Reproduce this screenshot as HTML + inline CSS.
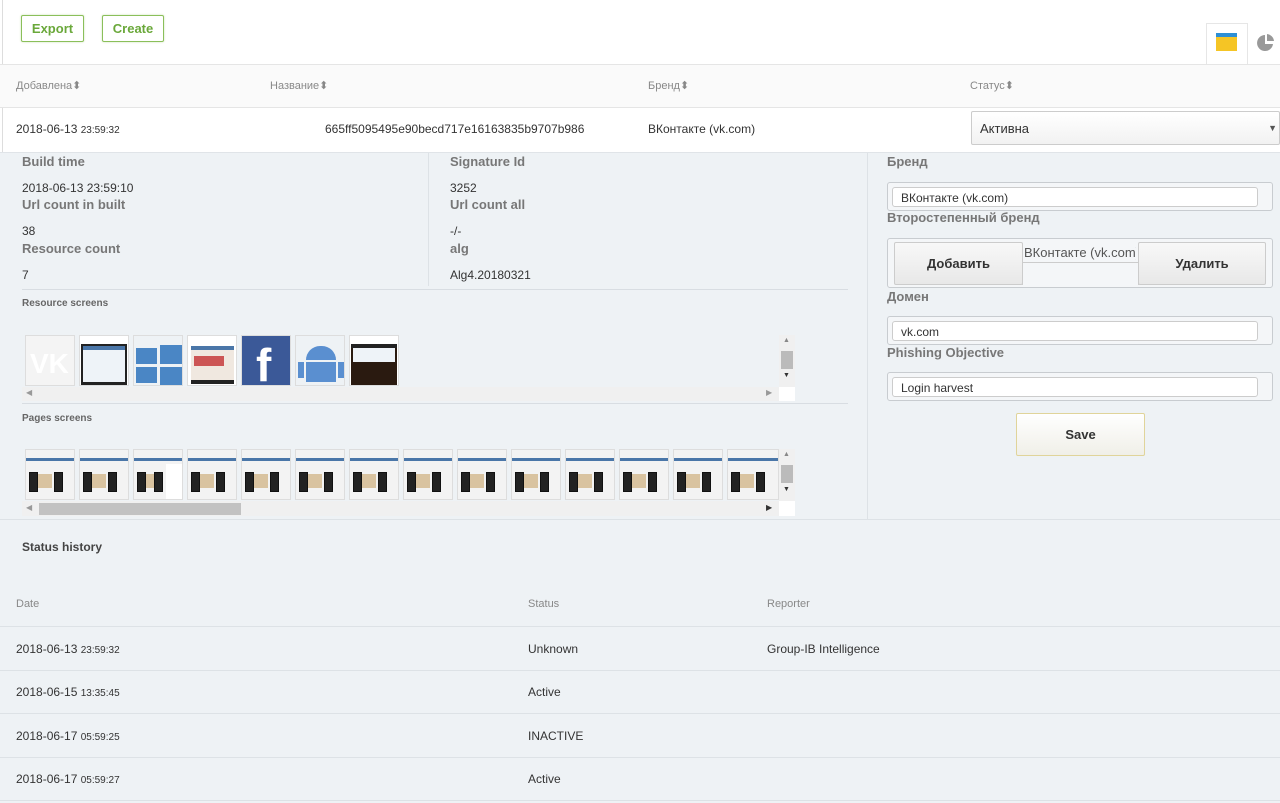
<!DOCTYPE html>
<html><head><meta charset="utf-8"><style>
*{box-sizing:border-box;margin:0;padding:0}
body{width:1280px;height:803px;overflow:hidden;background:#fff;font-family:"Liberation Sans",Arial,sans-serif;font-size:12px;color:#333;position:relative}
.a{position:absolute}
.btn{position:absolute;top:15px;height:27px;border:1px solid #8bbf5a;border-radius:2px;color:#6aa83a;font-size:13px;font-weight:bold;display:flex;align-items:center;justify-content:center;background:#fff;box-shadow:0 0 2px #cde3b8}
.th{color:#888;font-size:11px}
.lbl{color:#777;font-weight:bold;font-size:13px;position:absolute}
.val{position:absolute;font-size:12px;color:#333}
.sm{font-size:10px}
.inp{position:absolute;left:887px;width:386px;height:29px;border:1px solid #c8ccd0;border-radius:3px;background:#f4f6f8}
.inp div{position:absolute;left:4px;top:4px;right:14px;height:20px;border:1px solid #ccc;border-radius:3px;background:#fff;padding:3px 8px;font-size:12px}
.thumb{position:absolute;width:50px;height:51px;border:1px solid #ddd;background:#f3f3f3;overflow:hidden}
.pg .bar{position:absolute;left:0;right:0;top:8px;height:3px;background:#4a76a8}
.pg .ph{position:absolute;top:22px;width:9px;height:20px;background:#222;border:1px solid #111}
.pg .ph2{position:absolute;top:24px;left:16px;width:14px;height:14px;background:#d9c3a0}
.sb{position:absolute;width:16px;background:#f0f0f0}
.hr{position:absolute;left:0;width:1280px;height:1px;background:#dde2e6}
</style></head><body>
<div class="a" style="left:2px;top:0;width:1px;height:803px;background:#ddd"></div>
<div class="btn" style="left:21px;width:63px">Export</div>
<div class="btn" style="left:102px;width:62px">Create</div>
<div class="a" style="left:1206px;top:23px;width:42px;height:43px;border:1px solid #e6e6e6;border-bottom:none;background:#fff"></div>
<div class="a" style="left:1216px;top:33px;width:21px;height:18px;background:#f5c525;border-top:4px solid #2d8fd5"></div>
<svg class="a" style="left:1256px;top:33px" width="20" height="20" viewBox="0 0 20 20"><path d="M9 2A8 8 0 1 0 17 11H9Z" fill="#999"/><path d="M11 1A8 8 0 0 1 18 8H11Z" fill="#999"/></svg>
<div class="a" style="left:0;top:64px;width:1280px;height:44px;background:#fafafa;border-top:1px solid #e5e5e5;border-bottom:1px solid #e5e5e5"></div>
<div class="a th" style="left:16px;top:79px">Добавлена⬍</div>
<div class="a th" style="left:270px;top:79px">Название⬍</div>
<div class="a th" style="left:648px;top:79px">Бренд⬍</div>
<div class="a th" style="left:970px;top:79px">Статус⬍</div>
<div class="a" style="left:16px;top:122px">2018-06-13 <span class="sm">23:59:32</span></div>
<div class="a" style="left:325px;top:122px">665ff5095495e90becd717e16163835b9707b986</div>
<div class="a" style="left:648px;top:122px">ВКонтакте (vk.com)</div>
<div class="a" style="left:971px;top:111px;width:309px;height:34px;border:1px solid #ccc;border-radius:2px;background:linear-gradient(#fff,#f2f2f2);padding:9px 8px;font-size:13px">Активна<span style="position:absolute;right:2px;top:11px;font-size:9px;color:#555">▼</span></div>
<div class="a" style="left:0;top:152px;width:1280px;height:651px;background:#eef2f5;border-top:1px solid #e0e4e8"></div>
<div class="a" style="left:867px;top:153px;width:1px;height:366px;background:#dde2e6"></div>
<div class="a" style="left:428px;top:153px;width:1px;height:133px;background:#dde2e6"></div>
<div class="lbl" style="left:22px;top:154px">Build time</div>
<div class="val" style="left:22px;top:181px">2018-06-13 23:59:10</div>
<div class="lbl" style="left:22px;top:197px">Url count in built</div>
<div class="val" style="left:22px;top:224px">38</div>
<div class="lbl" style="left:22px;top:241px">Resource count</div>
<div class="val" style="left:22px;top:268px">7</div>
<div class="lbl" style="left:450px;top:154px">Signature Id</div>
<div class="val" style="left:450px;top:181px">3252</div>
<div class="lbl" style="left:450px;top:197px">Url count all</div>
<div class="val" style="left:450px;top:224px">-/-</div>
<div class="lbl" style="left:450px;top:241px">alg</div>
<div class="val" style="left:450px;top:268px">Alg4.20180321</div>
<div class="a" style="left:22px;top:289px;width:826px;height:1px;background:#d8dde2"></div>
<div class="a" style="left:22px;top:298px;font-size:10px;color:#666;font-weight:bold">Resource screens</div>
<div class="thumb" style="left:25px;top:335px;background:#f4f4f4"><span style="position:absolute;left:4px;top:12px;color:#fff;font-weight:bold;font-size:28px">VK</span></div>
<div class="thumb" style="left:79px;top:335px;background:#fff"><div class="a" style="left:1px;top:8px;width:46px;height:42px;background:#222"></div><div class="a" style="left:3px;top:10px;width:42px;height:36px;background:#eef3f8;border-top:4px solid #4a76a8"></div></div>
<div class="thumb" style="left:133px;top:335px;background:#eef2f5"><div class="a" style="left:2px;top:12px;width:21px;height:16px;background:#4a86c5"></div><div class="a" style="left:26px;top:9px;width:22px;height:19px;background:#4a86c5"></div><div class="a" style="left:2px;top:31px;width:21px;height:16px;background:#4a86c5"></div><div class="a" style="left:26px;top:31px;width:22px;height:19px;background:#4a86c5"></div></div>
<div class="thumb" style="left:187px;top:335px;background:#fff"><div class="a" style="left:3px;top:10px;width:43px;height:38px;background:#f0e8e0;border-top:4px solid #4a76a8;border-bottom:4px solid #222"></div><div class="a" style="left:6px;top:20px;width:30px;height:10px;background:#c55"></div></div>
<div class="thumb" style="left:241px;top:335px;background:#3b5998"><span style="position:absolute;left:14px;top:6px;color:#fff;font-weight:bold;font-size:46px;line-height:46px">f</span></div>
<div class="thumb" style="left:295px;top:335px;background:#eef2f5"><div class="a" style="left:10px;top:10px;width:30px;height:14px;background:#5a8fd0;border-radius:15px 15px 0 0"></div><div class="a" style="left:10px;top:26px;width:30px;height:20px;background:#5a8fd0"></div><div class="a" style="left:2px;top:26px;width:6px;height:16px;background:#5a8fd0"></div><div class="a" style="left:42px;top:26px;width:6px;height:16px;background:#5a8fd0"></div></div>
<div class="thumb" style="left:349px;top:335px;background:#fff"><div class="a" style="left:1px;top:8px;width:46px;height:42px;background:#2a1a10;border-top:4px solid #222"></div><div class="a" style="left:3px;top:12px;width:42px;height:14px;background:#eef3f8"></div></div>
<div class="sb" style="left:779px;top:335px;height:52px"><div class="a" style="left:2px;top:16px;width:12px;height:18px;background:#bbb"></div><span class="a" style="left:4px;top:2px;font-size:7px;color:#888">▲</span><span class="a" style="left:4px;top:37px;font-size:7px;color:#333">▼</span></div>
<div class="a" style="left:22px;top:387px;width:757px;height:14px;background:#f0f0f0"><span class="a" style="left:4px;top:1px;font-size:8px;color:#999">◀</span><span class="a" style="left:744px;top:1px;font-size:8px;color:#999">▶</span></div>
<div class="a" style="left:779px;top:387px;width:16px;height:14px;background:#fff"></div>
<div class="a" style="left:22px;top:403px;width:826px;height:1px;background:#d8dde2"></div>
<div class="a" style="left:22px;top:413px;font-size:10px;color:#666;font-weight:bold">Pages screens</div>
<div class="sb" style="left:779px;top:449px;height:52px"><div class="a" style="left:2px;top:16px;width:12px;height:18px;background:#bbb"></div><span class="a" style="left:4px;top:2px;font-size:7px;color:#888">▲</span><span class="a" style="left:4px;top:37px;font-size:7px;color:#333">▼</span></div>
<div class="a" style="left:22px;top:501px;width:757px;height:15px;background:#f0f0f0"><div class="a" style="left:17px;top:2px;width:202px;height:12px;background:#c2c2c2"></div><span class="a" style="left:4px;top:2px;font-size:8px;color:#999">◀</span><span class="a" style="left:744px;top:2px;font-size:8px;color:#333">▶</span></div>
<div class="a" style="left:779px;top:501px;width:16px;height:15px;background:#fff"></div>
<div class="hr" style="top:519px"></div>
<div class="lbl" style="left:887px;top:154px">Бренд</div>
<div class="inp" style="top:182px"><div>ВКонтакте (vk.com)</div></div>
<div class="lbl" style="left:887px;top:210px">Второстепенный бренд</div>
<div class="a" style="left:887px;top:238px;width:386px;height:50px;border:1px solid #c8ccd0;border-radius:3px;background:#f4f6f8"></div>
<div class="a" style="left:894px;top:242px;width:129px;height:43px;border:1px solid #ccc;border-radius:2px;background:linear-gradient(#f8f8f8,#e8e8e8);font-weight:bold;font-size:13px;display:flex;align-items:center;justify-content:center">Добавить</div>
<div class="a" style="left:1022px;top:262px;width:117px;height:23px;border:1px solid #ccc;border-bottom:none;background:#f4f6f8"></div>
<div class="a" style="left:1024px;top:245px;width:112px;overflow:hidden;white-space:nowrap;font-size:13px;color:#555">ВКонтакте (vk.com)</div>
<div class="a" style="left:1138px;top:242px;width:128px;height:43px;border:1px solid #ccc;border-radius:2px;background:linear-gradient(#f8f8f8,#e8e8e8);font-weight:bold;font-size:13px;display:flex;align-items:center;justify-content:center">Удалить</div>
<div class="lbl" style="left:887px;top:289px">Домен</div>
<div class="inp" style="top:316px"><div>vk.com</div></div>
<div class="lbl" style="left:887px;top:345px">Phishing Objective</div>
<div class="inp" style="top:372px"><div>Login harvest</div></div>
<div class="a" style="left:1016px;top:413px;width:129px;height:43px;border:1px solid #e0d49a;border-radius:2px;background:linear-gradient(#fff,#f0efe8);font-weight:bold;font-size:13px;display:flex;align-items:center;justify-content:center">Save</div>
<div class="a" style="left:22px;top:540px;font-weight:bold;font-size:12px;color:#444">Status history</div>
<div class="a th" style="left:16px;top:598px">Date</div>
<div class="a th" style="left:528px;top:598px">Status</div>
<div class="a th" style="left:767px;top:598px">Reporter</div>
<div class="hr" style="top:626px"></div>
<div class="a" style="left:16px;top:642px">2018-06-13 <span class="sm">23:59:32</span></div><div class="a" style="left:528px;top:642px">Unknown</div><div class="a" style="left:767px;top:642px">Group-IB Intelligence</div>
<div class="hr" style="top:670px"></div>
<div class="a" style="left:16px;top:685px">2018-06-15 <span class="sm">13:35:45</span></div><div class="a" style="left:528px;top:685px">Active</div>
<div class="hr" style="top:713px"></div>
<div class="a" style="left:16px;top:729px">2018-06-17 <span class="sm">05:59:25</span></div><div class="a" style="left:528px;top:729px">INACTIVE</div>
<div class="hr" style="top:757px"></div>
<div class="a" style="left:16px;top:772px">2018-06-17 <span class="sm">05:59:27</span></div><div class="a" style="left:528px;top:772px">Active</div>
<div class="hr" style="top:800px"></div>
<div class="a" style="left:0;top:0">
<div class="thumb pg" style="left:25px;top:449px"><div class="bar"></div><div class="ph" style="left:3px"></div><div class="ph2" style="left:12px"></div><div class="ph" style="left:28px"></div></div>
<div class="thumb pg" style="left:79px;top:449px"><div class="bar"></div><div class="ph" style="left:3px"></div><div class="ph2" style="left:12px"></div><div class="ph" style="left:28px"></div></div>
<div class="thumb pg" style="left:133px;top:449px"><div class="bar"></div><div class="ph" style="left:3px"></div><div class="ph2" style="left:12px"></div><div class="ph" style="left:20px"></div><div class="a" style="left:32px;top:14px;width:16px;height:36px;background:#fff"></div></div>
<div class="thumb pg" style="left:187px;top:449px"><div class="bar"></div><div class="ph" style="left:3px"></div><div class="ph2" style="left:12px"></div><div class="ph" style="left:28px"></div></div>
<div class="thumb pg" style="left:241px;top:449px"><div class="bar"></div><div class="ph" style="left:3px"></div><div class="ph2" style="left:12px"></div><div class="ph" style="left:28px"></div></div>
<div class="thumb pg" style="left:295px;top:449px"><div class="bar"></div><div class="ph" style="left:3px"></div><div class="ph2" style="left:12px"></div><div class="ph" style="left:28px"></div></div>
<div class="thumb pg" style="left:349px;top:449px"><div class="bar"></div><div class="ph" style="left:3px"></div><div class="ph2" style="left:12px"></div><div class="ph" style="left:28px"></div></div>
<div class="thumb pg" style="left:403px;top:449px"><div class="bar"></div><div class="ph" style="left:3px"></div><div class="ph2" style="left:12px"></div><div class="ph" style="left:28px"></div></div>
<div class="thumb pg" style="left:457px;top:449px"><div class="bar"></div><div class="ph" style="left:3px"></div><div class="ph2" style="left:12px"></div><div class="ph" style="left:28px"></div></div>
<div class="thumb pg" style="left:511px;top:449px"><div class="bar"></div><div class="ph" style="left:3px"></div><div class="ph2" style="left:12px"></div><div class="ph" style="left:28px"></div></div>
<div class="thumb pg" style="left:565px;top:449px"><div class="bar"></div><div class="ph" style="left:3px"></div><div class="ph2" style="left:12px"></div><div class="ph" style="left:28px"></div></div>
<div class="thumb pg" style="left:619px;top:449px"><div class="bar"></div><div class="ph" style="left:3px"></div><div class="ph2" style="left:12px"></div><div class="ph" style="left:28px"></div></div>
<div class="thumb pg" style="left:673px;top:449px"><div class="bar"></div><div class="ph" style="left:3px"></div><div class="ph2" style="left:12px"></div><div class="ph" style="left:28px"></div></div>
<div class="thumb pg" style="left:727px;top:449px;width:52px"><div class="bar"></div><div class="ph" style="left:3px"></div><div class="ph2" style="left:12px"></div><div class="ph" style="left:28px"></div></div>
</div>
</body></html>
